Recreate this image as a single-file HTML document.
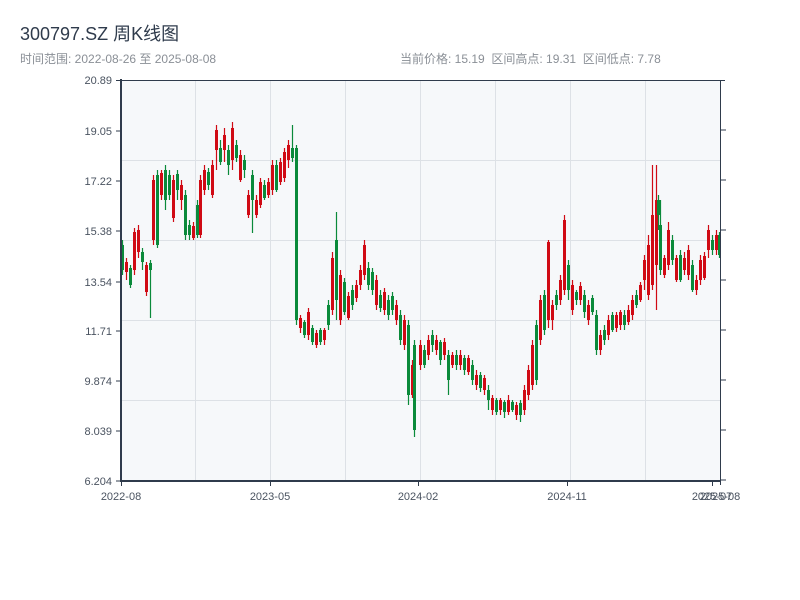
<!DOCTYPE html>
<html><head><meta charset="utf-8"><style>
body{margin:0;width:800px;height:600px;background:#fff;overflow:hidden;font-family:"Liberation Sans","Noto Sans CJK SC",sans-serif;}
</style></head><body>
<svg width="800" height="600" xmlns="http://www.w3.org/2000/svg" style="position:absolute;left:0;top:0">
<text x="20" y="40" font-size="18" fill="#2f3b4c" font-family="Liberation Sans,Noto Sans CJK SC,sans-serif">300797.SZ 周K线图</text>
<text x="20" y="63" font-size="12" fill="#8a8f96" font-family="Liberation Sans,Noto Sans CJK SC,sans-serif">时间范围: 2022-08-26 至 2025-08-08</text>
<text x="400" y="63" font-size="12" fill="#8a8f96" font-family="Liberation Sans,Noto Sans CJK SC,sans-serif" xml:space="preserve">当前价格: 15.19  区间高点: 19.31  区间低点: 7.78</text>
<rect x="121" y="80" width="599" height="401" fill="#f6f8fa"/>
<g stroke="#dde1e6" stroke-width="1">
<line x1="195.5" y1="80" x2="195.5" y2="481"/><line x1="270.5" y1="80" x2="270.5" y2="481"/><line x1="345.5" y1="80" x2="345.5" y2="481"/><line x1="420.5" y1="80" x2="420.5" y2="481"/><line x1="495.5" y1="80" x2="495.5" y2="481"/><line x1="570.5" y1="80" x2="570.5" y2="481"/><line x1="645.5" y1="80" x2="645.5" y2="481"/>
<line x1="121" y1="160.5" x2="720" y2="160.5"/><line x1="121" y1="240.5" x2="720" y2="240.5"/><line x1="121" y1="320.5" x2="720" y2="320.5"/><line x1="121" y1="400.5" x2="720" y2="400.5"/>
</g>
<g fill="none">
<path stroke="#d00a14" stroke-width="1.2" d="M126.5 258V280M134.5 228V275M138.5 225V258M146.5 262V296M153.5 175V245M161.5 170V200M173.5 175V222M181.5 180V210M193.5 222V240M200.5 175V238M204.5 165V195M212.5 160V198M216.5 125V170M224.5 128V162M232.5 122V170M240.5 150V182M248.5 190V218M256.5 195V218M260.5 178V208M268.5 178V198M272.5 160V195M280.5 158V185M284.5 148V182M288.5 140V168M300.5 315V333M308.5 308V340M316.5 330V348M324.5 328V345M332.5 252V315M340.5 270V325M348.5 292V320M356.5 280V302M360.5 265V290M364.5 240V280M376.5 275V310M384.5 288V315M396.5 300V325M404.5 315V350M412.5 360V398M420.5 340V370M428.5 335V360M436.5 335V355M444.5 338V360M452.5 352V368M460.5 350V370M468.5 355V375M476.5 370V390M484.5 375V395M492.5 395V415M500.5 398V415M508.5 395V415M516.5 402V420M524.5 385V415M528.5 365V400M532.5 340V390M540.5 295V345M548.5 240V328M552.5 300V330M560.5 275V305M564.5 215V295M572.5 280V315M580.5 282V305M588.5 300V325M600.5 330V355M608.5 315V340M616.5 312V332M620.5 310V330M628.5 305V325M632.5 295V320M640.5 282V302M644.5 255V290M648.5 235V300M652.5 165V290M656.5 165V310M664.5 255V278M668.5 222V270M676.5 255V282M684.5 252V275M688.5 245V280M696.5 275V295M700.5 255V285M704.5 252V280M708.5 225V258M716.5 230V255"/>
<path stroke="#d00a14" stroke-width="3" d="M126.5 262V272M134.5 232V270M138.5 230V252M146.5 265V292M153.5 180V240M161.5 173V195M173.5 180V218M181.5 185V200M193.5 226V238M200.5 180V235M204.5 170V190M212.5 165V195M216.5 130V150M224.5 135V150M232.5 128V160M240.5 155V180M248.5 195V215M256.5 200V215M260.5 182V205M268.5 182V195M272.5 165V190M280.5 162V182M284.5 152V178M288.5 145V160M300.5 318V328M308.5 312V335M316.5 333V345M324.5 330V340M332.5 258V310M340.5 275V320M348.5 296V318M356.5 285V298M360.5 270V285M364.5 245V275M376.5 280V305M384.5 292V310M396.5 305V320M404.5 320V345M412.5 365V395M420.5 345V365M428.5 340V355M436.5 340V350M444.5 342V355M452.5 355V365M460.5 355V365M468.5 358V372M476.5 375V385M484.5 378V390M492.5 398V410M500.5 400V410M508.5 400V412M516.5 405V415M524.5 390V410M528.5 370V395M532.5 345V385M540.5 300V340M548.5 242V320M552.5 305V320M560.5 280V300M564.5 220V290M572.5 285V310M580.5 286V300M588.5 305V320M600.5 335V350M608.5 320V335M616.5 315V328M620.5 312V325M628.5 310V322M632.5 300V315M640.5 285V300M644.5 260V280M648.5 245V295M652.5 215V285M656.5 200V265M664.5 258V275M668.5 230V265M676.5 258V280M684.5 258V270M688.5 250V275M696.5 280V290M700.5 260V280M704.5 256V278M708.5 230V250M716.5 235V250"/>
<path stroke="#0a8a3a" stroke-width="1.2" d="M122.5 240V275M130.5 265V288M142.5 248V270M150.5 260V318M157.5 170V248M165.5 165V210M169.5 170V200M177.5 170V200M185.5 190V240M189.5 220V240M197.5 200V238M208.5 168V190M220.5 140V165M228.5 145V175M236.5 140V162M244.5 155V178M252.5 170V233M264.5 180V200M276.5 160V192M292.5 125V162M296.5 145V325M304.5 320V338M312.5 325V345M320.5 328V345M328.5 300V330M336.5 212V320M344.5 278V315M352.5 285V310M368.5 262V290M372.5 268V295M380.5 290V312M388.5 295V320M392.5 292V315M400.5 310V345M408.5 320V405M414.5 340V437M424.5 345V368M432.5 330V352M440.5 340V365M448.5 350V395M456.5 350V370M464.5 355V375M472.5 360V385M480.5 372V392M488.5 385V410M496.5 398V415M504.5 400V418M512.5 400V412M520.5 400V422M536.5 320V385M544.5 290V335M556.5 290V310M568.5 260V300M576.5 290V305M584.5 290V318M592.5 295V315M596.5 310V355M604.5 325V345M612.5 312V332M624.5 310V330M636.5 290V308M658.5 195V230M660.5 200V275M672.5 235V265M680.5 250V282M692.5 260V292M712.5 235V255M719.5 232V258"/>
<path stroke="#0a8a3a" stroke-width="3" d="M122.5 245V270M130.5 268V285M142.5 252V262M150.5 263V270M157.5 175V245M165.5 170V200M169.5 175V195M177.5 174V190M185.5 195V235M189.5 225V235M197.5 205V235M208.5 172V185M220.5 148V162M228.5 150V165M236.5 145V158M244.5 160V170M252.5 175V200M264.5 185V198M276.5 165V190M292.5 148V158M296.5 148V320M304.5 322V335M312.5 328V342M320.5 330V342M328.5 305V325M336.5 240V300M344.5 282V312M352.5 290V305M368.5 268V285M372.5 272V290M380.5 295V308M388.5 300V315M392.5 296V310M400.5 315V340M408.5 325V395M414.5 345V430M424.5 350V365M432.5 335V345M440.5 342V360M448.5 355V380M456.5 355V365M464.5 358V370M472.5 365V380M480.5 375V388M488.5 390V400M496.5 400V412M504.5 402V412M512.5 402V410M520.5 403V415M536.5 325V380M544.5 295V330M556.5 295V305M568.5 265V290M576.5 292V300M584.5 295V312M592.5 298V312M596.5 315V350M604.5 330V340M612.5 315V330M624.5 315V325M636.5 295V305M658.5 200V215M660.5 225V270M672.5 240V260M680.5 255V280M692.5 265V290M712.5 240V250M719.5 235V255"/>
</g>
<g stroke="#2f3b4c" fill="none">
<line x1="121" y1="80.5" x2="725" y2="80.5" stroke-width="1"/>
<line x1="121" y1="79" x2="121" y2="482" stroke-width="2"/>
<line x1="120" y1="481" x2="721" y2="481" stroke-width="2"/>
<line x1="720.5" y1="80" x2="720.5" y2="485" stroke-width="1"/>
<line x1="116" y1="80.5" x2="121" y2="80.5"/><line x1="116" y1="131" x2="121" y2="131"/><line x1="116" y1="181" x2="121" y2="181"/><line x1="116" y1="231" x2="121" y2="231"/><line x1="116" y1="282" x2="121" y2="282"/><line x1="116" y1="331" x2="121" y2="331"/><line x1="116" y1="381" x2="121" y2="381"/><line x1="116" y1="431" x2="121" y2="431"/><line x1="116" y1="481" x2="121" y2="481"/>
<line x1="720" y1="130" x2="726" y2="130"/><line x1="720" y1="180" x2="726" y2="180"/><line x1="720" y1="230" x2="726" y2="230"/><line x1="720" y1="280" x2="726" y2="280"/><line x1="720" y1="330" x2="726" y2="330"/><line x1="720" y1="380" x2="726" y2="380"/><line x1="720" y1="430" x2="726" y2="430"/><line x1="720" y1="480" x2="726" y2="480"/>
<line x1="121.5" y1="481" x2="121.5" y2="486"/><line x1="270.5" y1="481" x2="270.5" y2="486"/><line x1="418.5" y1="481" x2="418.5" y2="486"/><line x1="567.5" y1="481" x2="567.5" y2="486"/><line x1="712.5" y1="481" x2="712.5" y2="486"/>
</g>
<g font-size="11" fill="#4a5360" text-anchor="end" font-family="Liberation Sans,sans-serif">
<text x="112" y="84">20.89</text><text x="112" y="135">19.05</text><text x="112" y="185">17.22</text><text x="112" y="235">15.38</text><text x="112" y="286">13.54</text><text x="112" y="335">11.71</text><text x="112" y="385">9.874</text><text x="112" y="435">8.039</text><text x="112" y="485">6.204</text>
</g>
<g font-size="11" fill="#4a5360" text-anchor="middle" font-family="Liberation Sans,sans-serif">
<text x="121" y="500">2022-08</text><text x="270" y="500">2023-05</text><text x="418" y="500">2024-02</text><text x="567" y="500">2024-11</text><text x="712" y="500">2025-07</text><text x="720" y="500">2025-08</text>
</g>
</svg>
</body></html>
